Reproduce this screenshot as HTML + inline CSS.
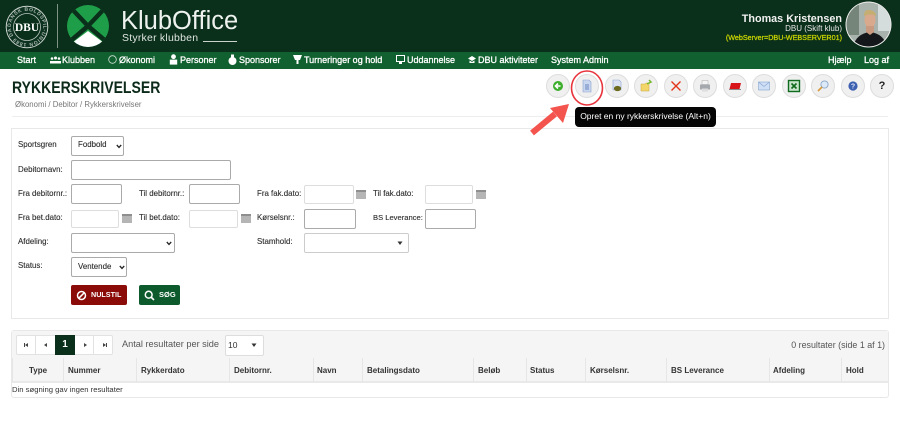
<!DOCTYPE html>
<html><head><meta charset="utf-8"><style>
html,body{margin:0;padding:0;width:900px;height:446px;overflow:hidden;background:#fff}
body{position:relative;font-family:"Liberation Sans",sans-serif;color:#333}
.a,.t{position:absolute;white-space:nowrap}
.t{line-height:12px;font-size:7.9px;color:#2d2d2d;-webkit-text-stroke:.12px #2d2d2d}
.n{position:absolute;top:53px;line-height:14px;font-size:9px;color:#fff;white-space:nowrap;-webkit-text-stroke:.3px #fff}
.i{position:absolute;background:#fff;border:1px solid #aaa;border-radius:2px;box-sizing:border-box}
.i.l{border-color:#ddd}
.b{position:absolute;top:74px;width:24px;height:24px;border-radius:50%;background:#f0f0f0;border:1px solid #ddd;box-sizing:border-box}
.b svg{position:absolute;left:4px;top:4px;width:14px;height:14px}
.cal{position:absolute;width:10px;height:9px;background:#b5b5b5;border-top:2px solid #8e8e8e;box-sizing:border-box}
.h{position:absolute;top:366px;font-size:8px;font-weight:bold;color:#333;line-height:10px;white-space:nowrap}
.sep{position:absolute;top:358px;width:1px;height:24px;background:#e6e6e6}
</style></head><body>
<div class="a" style="left:0;top:0;width:900px;height:52px;background:#0a2f1a"></div>
<div class="a" style="left:0;top:52px;width:900px;height:17px;background:#11602f"></div>
<svg class="a" style="left:5px;top:5px" width="44" height="44" viewBox="0 0 44 44"><defs><path id="ring" d="M22 22m-16.2 0a16.2 16.2 0 1 1 32.4 0a16.2 16.2 0 1 1 -32.4 0"/></defs><circle cx="22" cy="22" r="20.8" fill="#0d3320" stroke="#c9d2cc" stroke-width="1"/><circle cx="22" cy="22" r="13.5" fill="#0a2f1a" stroke="#b8c4bc" stroke-width=".8"/><text font-family="Liberation Sans" font-size="5" font-weight="bold" fill="#aebbb3" letter-spacing=".6"><textPath href="#ring">DANSK BOLDSPIL-UNION 1889 DANSK BOLD</textPath></text><text x="22" y="26" text-anchor="middle" font-family="Liberation Serif" font-weight="bold" font-size="11.5" fill="#fff">DBU</text></svg>
<div class="a" style="left:57px;top:4px;width:1px;height:44px;background:#7f9387"></div>
<svg class="a" style="left:66px;top:3px" width="45" height="45" viewBox="0 0 45 45"><defs><clipPath id="lg"><circle cx="22" cy="23" r="21"/></clipPath></defs><g clip-path="url(#lg)"><rect width="45" height="45" fill="#1f9e4a"/><path d="M22 23L4 4M22 23L40 4M22 23L2 40M22 23L42 40" stroke="#0a2f1a" stroke-width="4.5"/><path d="M22 28L38 40V46H6V40Z" fill="#fff"/></g></svg>
<div class="a" style="left:121px;top:5px;font-size:25.5px;line-height:32px;color:#eef2ef">KlubOffice</div>
<div class="a" style="left:122px;top:31px;font-size:10.5px;line-height:14px;letter-spacing:.22px;color:#dfe6e1">Styrker klubben</div>
<div class="a" style="left:203px;top:41px;width:34px;height:1px;background:#c9d2cc"></div>
<div class="a" style="right:58px;top:12px;font-size:10.8px;font-weight:bold;line-height:14px;color:#f2f2f2">Thomas Kristensen</div>
<div class="a" style="right:58px;top:23px;font-size:8px;line-height:11px;color:#e8e8e8">DBU (Skift klub)</div>
<div class="a" style="right:58px;top:32px;font-size:7.2px;line-height:11px;color:#c8d400;-webkit-text-stroke:.25px #c8d400">(WebServer=DBU-WEBSERVER01)</div>
<svg class="a" style="left:845px;top:1px" width="47" height="47" viewBox="0 0 47 47"><defs><clipPath id="c"><circle cx="23.5" cy="23.5" r="22"/></clipPath></defs><circle cx="23.5" cy="23.5" r="23" fill="#eee"/><g clip-path="url(#c)"><rect width="47" height="47" fill="#a9b3ad"/><rect x="0" y="0" width="14" height="34" fill="#75857a"/><rect x="33" y="0" width="14" height="30" fill="#d5dcdc"/><ellipse cx="25" cy="19" rx="5.5" ry="8" fill="#d8a98c"/><path d="M19 15Q19 8 25 9T31 15Q26 12 19 15Z" fill="#c6ad72"/><path d="M8 47Q10 33 25 31Q40 33 42 47Z" fill="#15181a"/><path d="M21 31L25 34L29 31V25H21Z" fill="#c99a7f"/></g></svg>

<div class="n" style="left:17px">Start</div>
<svg class="a" style="left:50px;top:56px" width="11" height="8" fill="#fff"><circle cx="2" cy="2.5" r="1.3"/><circle cx="5.5" cy="2" r="1.5"/><circle cx="9" cy="2.5" r="1.3"/><path d="M0 7.5V5H11V7.5Z"/></svg>
<div class="n" style="left:62px">Klubben</div>
<svg class="a" style="left:108px;top:55px" width="9" height="9"><circle cx="4.5" cy="4.5" r="3.8" fill="none" stroke="#cfe0d5" stroke-width=".8"/></svg>
<div class="n" style="left:119px">Økonomi</div>
<svg class="a" style="left:169px;top:54px" width="9" height="11"><circle cx="4.5" cy="2.7" r="2.4" fill="#fff"/><rect x=".8" y="5.6" width="7.4" height="5" fill="#fff"/></svg>
<div class="n" style="left:180px">Personer</div>
<svg class="a" style="left:228px;top:54px" width="9" height="11"><circle cx="4.5" cy="7" r="4" fill="#fff"/><rect x="3" y=".5" width="3" height="3" fill="#fff"/></svg>
<div class="n" style="left:239px">Sponsorer</div>
<svg class="a" style="left:293px;top:55px" width="9" height="9"><path d="M0 0H9L7 5H5.5V9H3.5V5H2Z" fill="#fff"/></svg>
<div class="n" style="left:304px">Turneringer og hold</div>
<svg class="a" style="left:396px;top:55px" width="9" height="9"><rect x=".5" y=".5" width="8" height="6" fill="none" stroke="#fff"/><rect x="3" y="7" width="3" height="2" fill="#fff"/></svg>
<div class="n" style="left:407px">Uddannelse</div>
<svg class="a" style="left:468px;top:56px" width="8" height="8"><path d="M4 0L8 2.5L4 5L0 2.5Z M1.5 4.5L4 6L6.5 4.5V7H1.5Z" fill="#fff"/></svg>
<div class="n" style="left:478px">DBU aktiviteter</div>
<div class="n" style="left:551px">System Admin</div>
<div class="n" style="left:828px">Hjælp</div>
<div class="n" style="left:864px">Log af</div>

<div class="a" style="left:12px;top:78px;font-size:16.5px;line-height:20px;font-weight:bold;color:#0c2a1a;transform:scaleX(.85);transform-origin:0 0">RYKKERSKRIVELSER</div>
<div class="a" style="left:15px;top:99px;font-size:7.8px;line-height:11px;color:#777">Økonomi / Debitor / Rykkerskrivelser</div>

<div class="b" style="left:546px"><svg viewBox="0 0 14 14"><circle cx="7" cy="7" r="5" fill="#3cae2c"/><path d="M9.5 7H5M7 4.5L4.5 7L7 9.5" stroke="#fff" stroke-width="1.6" fill="none"/></svg></div>
<div class="b" style="left:575px"><svg viewBox="0 0 14 14"><path d="M3 1H9L11 3V13H3Z" fill="#c8d6ef" stroke="#8ea4cf" stroke-width=".6"/><path d="M5 6H9M5 8H9M5 10H9" stroke="#4a6db0" stroke-width=".7"/></svg></div>
<div class="b" style="left:605px"><svg viewBox="0 0 14 14"><path d="M3 1H9L11 3V11H3Z" fill="#dbe3f2" stroke="#8ea4cf" stroke-width=".6"/><ellipse cx="7.5" cy="9.5" rx="3.6" ry="2.6" fill="#6b6a1e"/></svg></div>
<div class="b" style="left:634px"><svg viewBox="0 0 14 14"><path d="M2 5H6L7 4H10V12H2Z" fill="#f3d66a" stroke="#c5a63a" stroke-width=".5"/><path d="M8 5L12 3L10 1" stroke="#76b82a" stroke-width="1.5" fill="none"/></svg></div>
<div class="b" style="left:664px"><svg viewBox="0 0 14 14"><path d="M2.5 2.5L11.5 11.5M11.5 2.5L2.5 11.5" stroke="#e2361c" stroke-width="1.4"/></svg></div>
<div class="b" style="left:693px"><svg viewBox="0 0 14 14"><rect x="4" y="1.5" width="6" height="4" fill="#f4f4f4" stroke="#aaa" stroke-width=".5"/><rect x="2" y="5.5" width="10" height="5" fill="#a5a8ad"/><rect x="4" y="9.5" width="6" height="3" fill="#ddd"/></svg></div>
<div class="b" style="left:723px"><svg viewBox="0 0 14 14"><path d="M3 4H8L7 10H1.5Z M8 4H13L11.5 10H7Z" fill="#d8141b"/><rect x="1" y="10" width="12" height="1" fill="#8b8b8b"/></svg></div>
<div class="b" style="left:752px"><svg viewBox="0 0 14 14"><rect x="1.5" y="3" width="11" height="8" fill="#cfdff5" stroke="#86a4d0" stroke-width=".6"/><path d="M1.5 3L7 7.5L12.5 3" fill="none" stroke="#86a4d0" stroke-width=".6"/></svg></div>
<div class="b" style="left:782px"><svg viewBox="0 0 14 14"><rect x="1.5" y="1.5" width="11" height="11" fill="#c9e4cc" stroke="#0f6a1e" stroke-width="1.4"/><path d="M4.5 4.5L9.5 9.5M9.5 4.5L4.5 9.5" stroke="#0f6a1e" stroke-width="1.6"/></svg></div>
<div class="b" style="left:811px"><svg viewBox="0 0 14 14"><circle cx="8.5" cy="5.5" r="3.6" fill="#dbe9f9" stroke="#8aa6c8" stroke-width=".9"/><path d="M6 8L2 12" stroke="#d89a3a" stroke-width="1.6"/></svg></div>
<div class="b" style="left:841px"><svg viewBox="0 0 14 14"><circle cx="7" cy="7" r="4.6" fill="#3d5fb0"/><text x="7" y="9.6" text-anchor="middle" font-size="7" font-weight="bold" fill="#dde6f8" font-family="Liberation Sans">?</text></svg></div>
<div class="b" style="left:870px"><div style="position:absolute;left:0;top:0;width:22px;text-align:center;line-height:22px;font-size:11px;font-weight:bold;color:#222">?</div></div>

<div class="a" style="left:12px;top:116px;width:876px;height:1px;background:#eee"></div>
<div class="a" style="left:11px;top:128px;width:878px;height:191px;border:1px solid #e8e8e8;box-sizing:border-box;background:#fff"></div>

<svg class="a" style="left:525px;top:68px" width="80" height="72" viewBox="0 0 80 72" fill="none"><ellipse cx="62" cy="20" rx="15.5" ry="17" stroke="#e8343c" stroke-width="1.6"/><path d="M7 65L30 46" stroke="#f4544e" stroke-width="6"/><path d="M44 36L25 40L38 55Z" fill="#f4544e"/></svg>

<div class="t" style="left:18px;top:139px">Sportsgren</div>
<div class="i" style="left:71px;top:136px;width:53px;height:20px"></div><div class="t" style="left:78px;top:139px">Fodbold</div>
<svg class="a" style="left:116px;top:144px" width="6" height="5"><path d="M.8 1L3 3.4L5.2 1" stroke="#222" stroke-width="1.3" fill="none"/></svg>
<div class="t" style="left:18px;top:164px">Debitornavn:</div><div class="i" style="left:71px;top:160px;width:160px;height:20px"></div>

<div class="t" style="left:18px;top:188px">Fra debitornr.:</div><div class="i" style="left:71px;top:184px;width:51px;height:20px"></div>
<div class="t" style="left:139px;top:188px">Til debitornr.:</div><div class="i" style="left:189px;top:184px;width:51px;height:20px"></div>
<div class="t" style="left:257px;top:188px">Fra fak.dato:</div><div class="i l" style="left:304px;top:185px;width:50px;height:19px"></div><div class="cal" style="left:356px;top:190px"></div>
<div class="t" style="left:373px;top:188px">Til fak.dato:</div><div class="i l" style="left:425px;top:185px;width:48px;height:19px"></div><div class="cal" style="left:476px;top:190px"></div>

<div class="t" style="left:18px;top:212px">Fra bet.dato:</div><div class="i l" style="left:71px;top:210px;width:48px;height:18px"></div><div class="cal" style="left:122px;top:214px"></div>
<div class="t" style="left:139px;top:212px">Til bet.dato:</div><div class="i l" style="left:189px;top:210px;width:49px;height:18px"></div><div class="cal" style="left:241px;top:214px"></div>
<div class="t" style="left:257px;top:212px">Kørselsnr.:</div><div class="i" style="left:304px;top:209px;width:52px;height:20px"></div>
<div class="t" style="left:373px;top:212px;font-size:7.6px">BS Leverance:</div><div class="i" style="left:425px;top:209px;width:51px;height:20px"></div>

<div class="t" style="left:18px;top:236px">Afdeling:</div><div class="i" style="left:71px;top:233px;width:104px;height:20px"></div>
<svg class="a" style="left:166px;top:241px" width="6" height="5"><path d="M.8 1L3 3.4L5.2 1" stroke="#222" stroke-width="1.3" fill="none"/></svg>
<div class="t" style="left:257px;top:236px">Stamhold:</div><div class="i" style="left:304px;top:233px;width:105px;height:20px;border-color:#ccc"></div>
<svg class="a" style="left:397px;top:241px" width="6" height="5"><path d="M.5 .5H5.5L3 4Z" fill="#333"/></svg>

<div class="t" style="left:18px;top:260px">Status:</div><div class="i" style="left:71px;top:257px;width:56px;height:20px"></div><div class="t" style="left:78px;top:261px">Ventende</div>
<svg class="a" style="left:119px;top:265px" width="6" height="5"><path d="M.8 1L3 3.4L5.2 1" stroke="#222" stroke-width="1.3" fill="none"/></svg>

<div class="a" style="left:71px;top:285px;width:56px;height:20px;background:#8a0b08;border-radius:2px"></div>
<svg class="a" style="left:76px;top:290px" width="11" height="11"><circle cx="5.5" cy="5.5" r="4" fill="none" stroke="#fff" stroke-width="1.5"/><path d="M2.8 8.2L8.2 2.8" stroke="#fff" stroke-width="1.5"/></svg>
<div class="a" style="left:91px;top:289px;font-size:7.2px;font-weight:bold;line-height:11px;color:#fff">NULSTIL</div>
<div class="a" style="left:139px;top:285px;width:41px;height:20px;background:#0d5a2c;border-radius:2px"></div>
<svg class="a" style="left:144px;top:290px" width="11" height="11"><circle cx="4.7" cy="4.7" r="3.4" fill="none" stroke="#fff" stroke-width="1.5"/><path d="M7 7L10 10" stroke="#fff" stroke-width="1.6"/></svg>
<div class="a" style="left:159px;top:289px;font-size:7.5px;font-weight:bold;line-height:11px;color:#fff">SØG</div>

<div class="a" style="left:11px;top:330px;width:878px;height:68px;border:1px solid #e8e8e8;border-radius:3px;box-sizing:border-box;background:#fff"></div>
<div class="a" style="left:12px;top:331px;width:876px;height:51px;background:#f5f5f5"></div>
<div class="a" style="left:16px;top:335px;width:97px;height:20px;border:1px solid #e2e2e2;border-radius:2px;box-sizing:border-box;background:#fff"></div>
<div class="a" style="left:35px;top:335px;width:1px;height:20px;background:#e2e2e2"></div>
<div class="a" style="left:93px;top:335px;width:1px;height:20px;background:#e2e2e2"></div>
<div class="a" style="left:55px;top:335px;width:20px;height:20px;background:#0a2f1a;color:#fff;font-size:10px;font-weight:bold;line-height:20px;text-align:center">1</div>
<svg class="a" style="left:23px;top:342px" width="90" height="6" fill="#444"><path d="M1 1H2V5H1ZM5 1V5L2 3Z"/><path d="M24 1V5L21 3Z"/><path d="M61 1V5L64 3Z"/><path d="M80 1V5L83 3ZM83 1H84V5H83Z"/></svg>
<div class="a" style="left:122px;top:338px;font-size:9.2px;line-height:12px;color:#555">Antal resultater per side</div>
<div class="i" style="left:225px;top:335px;width:39px;height:21px;border-color:#ddd"></div>
<div class="a" style="left:228px;top:339px;font-size:8.5px;line-height:12px;color:#333">10</div>
<svg class="a" style="left:251px;top:343px" width="6" height="5"><path d="M.5 .5H5.5L3 4Z" fill="#333"/></svg>
<div class="a" style="right:15px;top:339px;font-size:8.9px;line-height:12px;color:#555">0 resultater (side 1 af 1)</div>

<div class="a" style="left:12px;top:381px;width:876px;height:2px;background:#e9e9e9"></div>
<div class="sep" style="left:12px"></div><div class="sep" style="left:63px"></div><div class="sep" style="left:136px"></div><div class="sep" style="left:229px"></div><div class="sep" style="left:313px"></div><div class="sep" style="left:362px"></div><div class="sep" style="left:473px"></div><div class="sep" style="left:526px"></div><div class="sep" style="left:585px"></div><div class="sep" style="left:666px"></div><div class="sep" style="left:769px"></div><div class="sep" style="left:841px"></div>
<div class="h" style="left:29px">Type</div><div class="h" style="left:68px">Nummer</div><div class="h" style="left:141px">Rykkerdato</div><div class="h" style="left:234px">Debitornr.</div><div class="h" style="left:317px">Navn</div><div class="h" style="left:367px">Betalingsdato</div><div class="h" style="left:478px">Beløb</div><div class="h" style="left:530px">Status</div><div class="h" style="left:590px">Kørselsnr.</div><div class="h" style="left:671px">BS Leverance</div><div class="h" style="left:773px">Afdeling</div><div class="h" style="left:846px">Hold</div>
<div class="a" style="left:12px;top:384px;font-size:7.7px;line-height:11px;color:#333">Din søgning gav ingen resultater</div>

<div class="a" style="left:575px;top:107px;width:141px;height:20px;background:#050505;border-radius:4px;color:#fff;font-size:8.5px;line-height:19px;text-align:center;white-space:nowrap">Opret en ny rykkerskrivelse (Alt+n)</div>
</body></html>
